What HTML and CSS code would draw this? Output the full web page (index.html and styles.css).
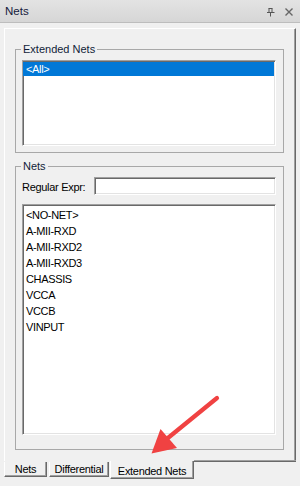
FILE: index.html
```html
<!DOCTYPE html>
<html>
<head>
<meta charset="utf-8">
<link rel="stylesheet" href="styles.css">
</head>
<body>
<div class="titlebar">
  <span class="title">Nets</span>
  <span class="tb-buttons">
    <svg class="pin" width="10" height="10" viewBox="0 0 10 10"><path d="M2.5 1.5H6.5M3 1.5V5.5M6 1.5V5.5M1 5.5H8.5M4.5 5.5V9.5" stroke="#555" stroke-width="1" fill="none"/></svg>
    <svg class="close" width="10" height="10" viewBox="0 0 10 10"><path d="M1.5 1.5L8.5 8.5M8.5 1.5L1.5 8.5" stroke="#666" stroke-width="1.4" fill="none"/></svg>
  </span>
</div>
<div class="panel">
  <fieldset class="group group-ext">
    <legend>Extended Nets</legend>
    <div class="listbox list-ext">
      <div class="item item-sel">&lt;All&gt;</div>
    </div>
  </fieldset>
  <fieldset class="group group-nets">
    <legend>Nets</legend>
    <div class="regex-row">
      <span class="regex-label">Regular Expr:</span>
      <div class="textbox"></div>
    </div>
    <div class="listbox list-nets">
      <div class="item">&lt;NO-NET&gt;</div>
      <div class="item">A-MII-RXD</div>
      <div class="item">A-MII-RXD2</div>
      <div class="item">A-MII-RXD3</div>
      <div class="item">CHASSIS</div>
      <div class="item">VCCA</div>
      <div class="item">VCCB</div>
      <div class="item">VINPUT</div>
    </div>
  </fieldset>
</div>
<div class="tabstrip">
  <div class="tab tab-nets">Nets</div>
  <div class="tab tab-diff">Differential</div>
  <div class="tab tab-active">Extended Nets</div>
  <div class="tabfill"></div>
</div>
<svg class="arrow" width="300" height="486" viewBox="0 0 300 486">
  <g filter="url(#soft)">
    <path d="M217 398L163 442" stroke="#f04242" stroke-width="4.2" stroke-linecap="round" fill="none"/>
    <path d="M151.5 453.5L160.5 429L177 448Z" fill="#f04242"/>
  </g>
  <defs>
    <filter id="soft" x="-20%" y="-20%" width="140%" height="140%">
      <feGaussianBlur stdDeviation="0.5"/>
    </filter>
  </defs>
</svg>
</body>
</html>
```

FILE: styles.css
```css
html, body {
  margin: 0;
  padding: 0;
}
body {
  width: 300px;
  height: 486px;
  overflow: hidden;
  background: #f0f0f0;
  font-family: "Liberation Sans", Arial, sans-serif;
  font-size: 11px;
  color: #000;
  position: relative;
}
.titlebar {
  height: 22px;
  border-bottom: 1px solid #bdbdbd;
  background: linear-gradient(#e3e3e3, #d6d6d6);
  display: flex;
  align-items: center;
  justify-content: space-between;
  padding: 0 6px 0 5px;
}
.title {
  color: #14203c;
  font-size: 11.5px;
  line-height: 13px;
  padding-top: 1px;
}
.tb-buttons {
  display: flex;
  align-items: center;
  gap: 8px;
  padding-top: 2px;
}
.tb-buttons svg {
  display: block;
}
.panel {
  box-sizing: border-box;
  margin: 5px 4px 0 4px;
  height: 433px;
  border-top: 1px solid #fff;
  border-left: 1px solid #fff;
  border-right: 1px solid #696969;
  box-shadow: inset -1px 0 0 #a0a0a0;
  padding: 14px 11px 0 10px;
}
.group {
  margin: 0;
  border: 1px solid #a8a8a8;
  padding: 4px 7px 6px 6px;
  min-width: 0;
}
.group legend {
  padding: 0 2px;
  margin-left: -1px;
  line-height: 13px;
  color: #101c38;
}
.group-nets {
  margin-top: 7px;
  padding-bottom: 14px;
}
.listbox {
  box-sizing: border-box;
  background: #fff;
  border: 1px solid;
  border-color: #a0a0a0 #fff #fff #a0a0a0;
  box-shadow: inset 1px 1px 0 #696969, inset -1px -1px 0 #e3e3e3;
  letter-spacing: -0.35px;
}
.list-ext {
  height: 86px;
  padding: 1px 1px 0 0;
}
.list-ext .item {
  line-height: 14px;
  height: 14px;
  padding-left: 3px;
}
.item-sel {
  background: #0078d7;
  color: #fff;
}
.list-nets {
  height: 231px;
  margin-top: 9px;
  padding: 2px 0 0 1px;
}
.list-nets .item {
  line-height: 16px;
  height: 16px;
  padding-left: 2px;
}
.regex-row {
  display: flex;
  align-items: center;
  justify-content: space-between;
  height: 18px;
}
.regex-label {
  letter-spacing: -0.3px;
  padding-top: 1px;
}
.textbox {
  box-sizing: border-box;
  width: 182px;
  height: 18px;
  background: #fff;
  border: 1px solid;
  border-color: #a0a0a0 #fff #fff #a0a0a0;
  box-shadow: inset 1px 1px 0 #696969, inset -1px -1px 0 #e3e3e3;
}
.tabstrip {
  display: flex;
  align-items: flex-start;
  padding-left: 4px;
}
.tab {
  box-sizing: border-box;
  text-align: center;
  letter-spacing: -0.3px;
  line-height: 13px;
  border-left: 1px solid #fff;
  border-right: 1px solid #696969;
  border-bottom: 1px solid #696969;
  box-shadow: inset -1px -1px 0 #a0a0a0;
}
.tab-nets,
.tab-diff {
  margin-top: 1px;
  height: 15px;
  padding-top: 1px;
}
.tab-nets {
  width: 43px;
}
.tab-diff {
  width: 60px;
  margin-left: 2px;
}
.tab-active {
  width: 84px;
  margin-left: 1px;
  height: 18px;
  padding-top: 4px;
}
.tabfill {
  flex: 1;
  margin-right: 4px;
  height: 1px;
  border-top: 1px solid #696969;
  box-shadow: 0 -1px 0 #a0a0a0;
}
.arrow {
  position: absolute;
  left: 0;
  top: 0;
  pointer-events: none;
}
```
